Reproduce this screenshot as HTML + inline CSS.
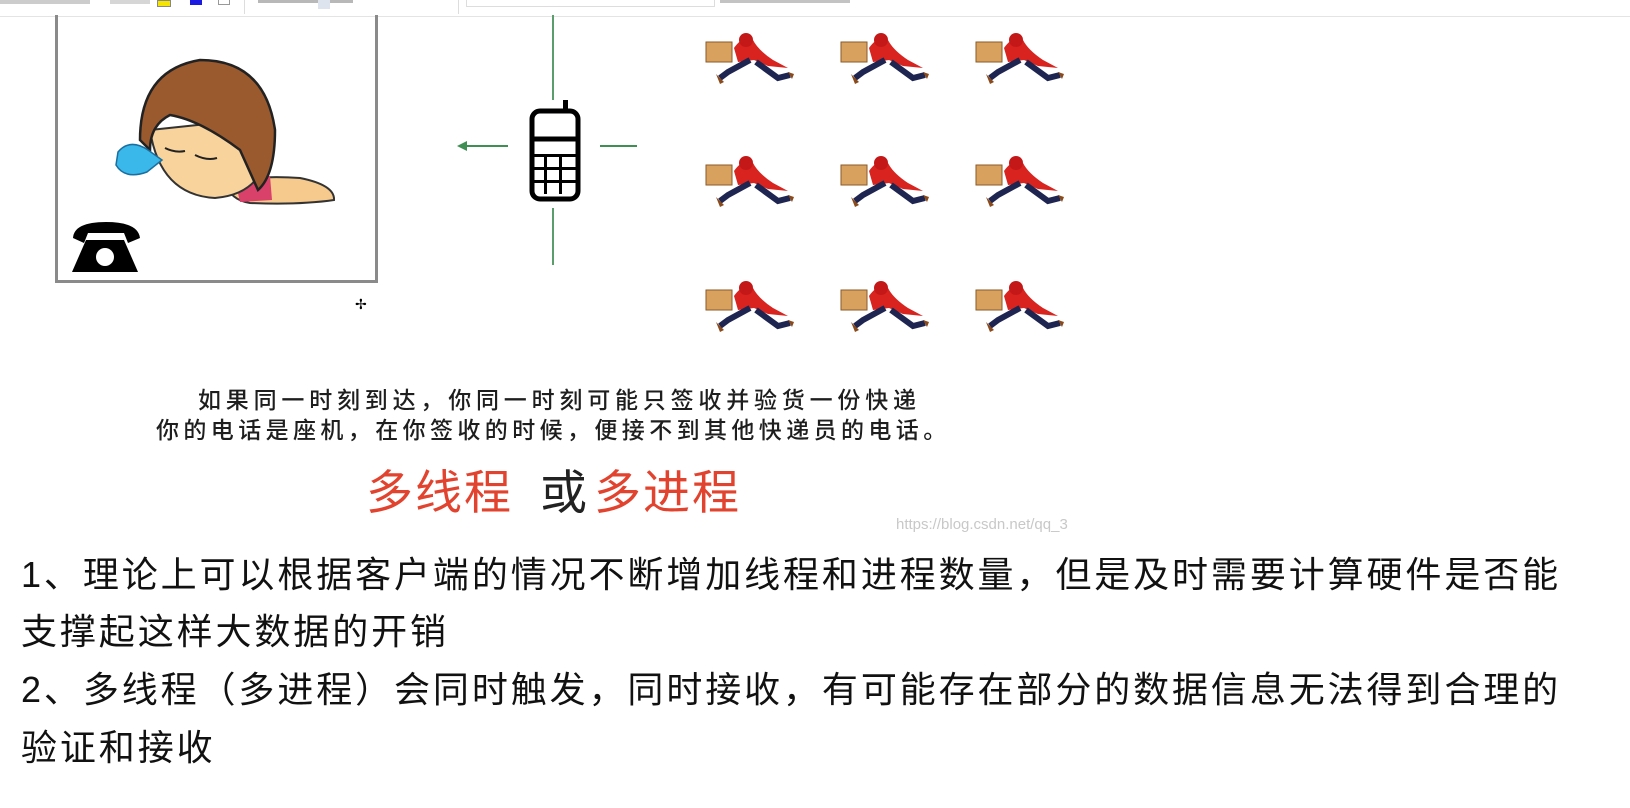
<!DOCTYPE html>
<html><head><meta charset="utf-8">
<style>
html,body{margin:0;padding:0;background:#fff;}
body{width:1630px;height:808px;position:relative;overflow:hidden;font-family:"Liberation Sans","Noto Sans CJK SC",sans-serif;}
.abs{position:absolute;}
.tb{left:0;top:0;width:1630px;height:16px;background:#fff;border-bottom:1px solid #e4e4e4;}
.cap{font-family:"Liberation Sans","Noto Sans CJK SC",sans-serif;color:#1e1e1e;font-size:23px;white-space:nowrap;line-height:30px;font-weight:500;}
.red{color:#e2432e;}
.big{font-size:47px;white-space:nowrap;line-height:50px;letter-spacing:2px;}
.txt{left:21px;font-size:36px;letter-spacing:2.9px;color:#111;white-space:nowrap;line-height:57px;font-family:"Liberation Sans","Noto Sans CJK SC",sans-serif;}
</style></head><body>
<div class="abs tb">
  <div class="abs" style="left:0;top:0;width:90px;height:4px;background:#999;opacity:.5"></div>
  <div class="abs" style="left:110px;top:0;width:40px;height:4px;background:#999;opacity:.4"></div>
  <div class="abs" style="left:157px;top:0;width:12px;height:5px;background:#f5e400;border:1px solid #888;"></div>
  <div class="abs" style="left:190px;top:0;width:12px;height:5px;background:#1a1ae0;"></div>
  <div class="abs" style="left:218px;top:0;width:10px;height:4px;border:1px solid #999;border-top:none"></div>
  <div class="abs" style="left:244px;top:0;width:1px;height:14px;background:#ddd"></div>
  <div class="abs" style="left:258px;top:0;width:95px;height:3px;background:#888;opacity:.6"></div>
  <div class="abs" style="left:318px;top:0;width:12px;height:9px;background:#dde4ee"></div>
  <div class="abs" style="left:458px;top:0;width:1px;height:14px;background:#ddd"></div>
  <div class="abs" style="left:466px;top:0;width:247px;height:6px;border:1px solid #ddd;border-top:none"></div>
  <div class="abs" style="left:720px;top:0;width:130px;height:3px;background:#888;opacity:.5"></div>
</div>

<div class="abs" style="left:55px;top:15px;width:317px;height:265px;border:3px solid #8a8a8a;border-top:none;"></div>
<svg class="abs" style="left:58px;top:15px" width="314" height="265" viewBox="58 15 314 265">
  <path d="M225 182 Q260 175 300 178 Q335 185 334 200 Q300 205 250 203 Q230 200 225 182Z" fill="#f6c98c" stroke="#333" stroke-width="2"/>
  <path d="M235 180 L270 176 L272 200 L240 202Z" fill="#d9406a"/>
  <path d="M150 130 Q160 195 215 198 Q250 195 262 170 L245 120Z" fill="#f8d39b" stroke="#333" stroke-width="2"/>
  <path d="M140 140 Q140 70 200 60 Q265 60 275 130 Q275 175 258 190 L240 150 Q200 120 170 115 Q150 125 150 150Z" fill="#9a5a2e" stroke="#222" stroke-width="2.5"/>
  <path d="M165 148 q10 5 20 3 M195 155 q12 6 22 3" stroke="#222" stroke-width="2" fill="none"/>
  <path d="M118 152 Q130 138 148 150 L162 160 L147 172 Q125 180 116 165Z" fill="#3ab8ea" stroke="#1a6fa0" stroke-width="1.5"/>
  <path d="M73 238 Q74 222 106 222 Q138 222 140 238 L128 243 L124 233 L88 233 L84 243Z" fill="#000"/>
  <path d="M86 240 L124 240 L138 272 L72 272Z" fill="#000"/>
  <circle cx="105" cy="257" r="9" fill="#fff"/>
</svg>

<svg class="abs" style="left:430px;top:15px" width="230" height="260">
  <line x1="123" y1="0" x2="123" y2="85" stroke="#5a9e6b" stroke-width="2"/>
  <line x1="123" y1="193" x2="123" y2="250" stroke="#5a9e6b" stroke-width="2"/>
  <line x1="30" y1="131" x2="78" y2="131" stroke="#3f8f55" stroke-width="2"/>
  <path d="M27 131 L37 126 L37 136Z" fill="#3f8f55"/>
  <line x1="170" y1="131" x2="207" y2="131" stroke="#3f8f55" stroke-width="2"/>
  <rect x="102" y="96" width="46" height="88" rx="8" fill="none" stroke="#000" stroke-width="5"/>
  <rect x="133" y="85" width="5" height="13" fill="#000"/>
  <line x1="102" y1="124" x2="148" y2="124" stroke="#000" stroke-width="5"/>
  <g fill="#000">
    <rect x="114" y="139" width="3" height="40"/><rect x="129" y="139" width="3" height="40"/>
    <rect x="104" y="139" width="42" height="3"/><rect x="104" y="152" width="42" height="3"/><rect x="104" y="165" width="42" height="3"/>
  </g>
</svg>

<svg class="abs" style="left:690px;top:25px" width="420" height="330">
  <defs>
    <g id="c">
      <rect x="8" y="12" width="26" height="20" fill="#d9a15e" stroke="#8a5a2a"/>
      <path d="M36 18 Q45 5 55 10 Q60 20 75 30 L90 38 L70 36 L56 30 L40 32Z" fill="#d8231e"/>
      <circle cx="48" cy="10" r="7" fill="#c41818"/>
      <path d="M52 30 L30 42 L22 48 M58 32 L80 48 L92 45" stroke="#1e2550" stroke-width="6" fill="none"/>
      <path d="M18 44 l8 8 l-4 2Z M90 42 l6 2 l-2 5Z" fill="#8a4a1a"/>
    </g>
  </defs>
  <use href="#c" x="8" y="5"/><use href="#c" x="143" y="5"/><use href="#c" x="278" y="5"/>
  <use href="#c" x="8" y="128"/><use href="#c" x="143" y="128"/><use href="#c" x="278" y="128"/>
  <use href="#c" x="8" y="253"/><use href="#c" x="143" y="253"/><use href="#c" x="278" y="253"/>
</svg>

<div class="abs" style="left:355px;top:296px;font-size:14px;color:#000;">✢</div>

<div class="abs cap" style="left:198px;top:385px;letter-spacing:4.8px">如果同一时刻到达，你同一时刻可能只签收并验货一份快递</div>
<div class="abs cap" style="left:156px;top:415px;letter-spacing:4.4px">你的电话是座机，在你签收的时候，便接不到其他快递员的电话。</div>

<div class="abs big red" style="left:366px;top:468px">多线程</div>
<div class="abs big" style="left:540px;top:468px;color:#222">或</div>
<div class="abs big red" style="left:594px;top:468px">多进程</div>

<div class="abs" style="left:896px;top:516px;font-size:15px;color:#c8c8c8;">https://blog.csdn.net/qq_3</div>

<div class="abs txt" style="top:546px">1、理论上可以根据客户端的情况不断增加线程和进程数量，但是及时需要计算硬件是否能</div>
<div class="abs txt" style="top:603px">支撑起这样大数据的开销</div>
<div class="abs txt" style="top:661px">2、多线程（多进程）会同时触发，同时接收，有可能存在部分的数据信息无法得到合理的</div>
<div class="abs txt" style="top:719px">验证和接收</div>
</body></html>
